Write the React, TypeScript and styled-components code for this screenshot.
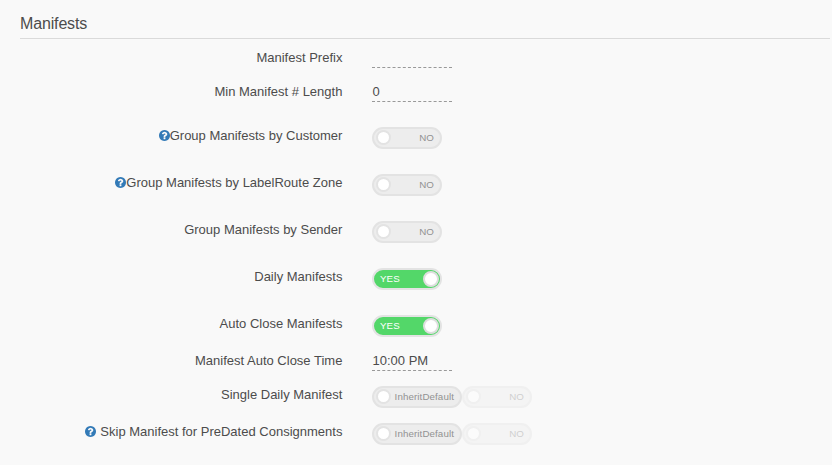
import React from "react";
import styled, { createGlobalStyle } from "styled-components";

const Global = createGlobalStyle`
  * { box-sizing: border-box; }
  body { margin: 0; background: #f9f9f9; font-family: "Liberation Sans", Arial, sans-serif; color: #4c4c4c; }
`;
const Page = styled.main`
  width: 832px;
  height: 465px;
  padding: 10px 2px 0 20px;
  background: #f9f9f9;
  overflow: hidden;
`;
const Title = styled.h2`
  margin: 0;
  height: 29px;
  border-bottom: 1px solid #dadada;
  font-size: 16px;
  line-height: 27px;
  letter-spacing: -0.15px;
  font-weight: 400;
`;
const Row = styled.div<{ $h: number }>`
  height: ${(p) => p.$h}px;
  display: grid;
  grid-template-columns: 322.4px 1fr;
  column-gap: 29.6px;
`;
const Label = styled.label<{ $top: number }>`
  display: flex;
  justify-content: flex-end;
  align-items: center;
  height: 18px;
  margin-top: ${(p) => p.$top}px;
  font-size: 13px;
  white-space: nowrap;
`;
const HelpIcon = styled.svg<{ $gap: number }>`
  fill: #337ab7;
  width: 11px;
  height: 11px;
  margin-right: ${(p) => p.$gap}px;
`;
const Value = styled.span`
  width: 80px;
  height: 20px;
  margin-top: 9px;
  padding-left: 0.5px;
  border-bottom: 1px dashed #999;
  font-size: 13px;
  line-height: 20px;
`;
const Controls = styled.div`
  display: flex;
  align-items: flex-start;
  padding-top: 13px;
`;
const Toggle = styled.span<{ $on?: boolean; $wide?: boolean; $faded?: boolean }>`
  display: flex;
  align-items: flex-start;
  justify-content: space-between;
  flex-direction: ${(p) => (p.$on ? "row-reverse" : "row")};
  width: ${(p) => (p.$wide ? 90 : 70)}px;
  height: 22px;
  border: 2px solid #e3e3e3;
  border-radius: 11px;
  background: ${(p) => (p.$on ? "#53d769" : "#ededed")};
  color: ${(p) => (p.$on ? "#fff" : "#929292")};
  padding: 1px ${(p) => (p.$on ? 1 : 6)}px 0 ${(p) => (p.$on ? 6 : 2)}px;
  opacity: ${(p) => (p.$faded ? 0.4 : 1)};
`;
const ToggleText = styled.span`
  font-size: 9.75px;
  line-height: 15px;
  letter-spacing: 0.1px;
`;
const Knob = styled.i<{ $on?: boolean }>`
  width: ${(p) => (p.$on ? 16 : 15)}px;
  height: ${(p) => (p.$on ? 16 : 15)}px;
  border-radius: 50%;
  border: 2px solid ${(p) => (p.$on ? "#dedede" : "#e3e3e3")};
  background: #fff;
`;

function Help({ gap }: { gap: number }) {
  return (
    <HelpIcon $gap={gap} viewBox="128 128 1536 1536" aria-hidden="true">
      <path d="M1024 1376v-192q0-14-9-23t-23-9h-192q-14 0-23 9t-9 23v192q0 14 9 23t23 9h192q14 0 23-9t9-23zm256-672q0-88-55.5-163t-138.5-116-170-41q-243 0-371 213-15 24 8 42l132 100q7 6 19 6 16 0 25-12 53-68 86-92 34-24 86-24 48 0 85.5 26t37.5 59q0 38-20 61t-68 45q-63 28-115.5 86.5t-52.5 125.5v36q0 14 9 23t23 9h192q14 0 23-9t9-23q0-19 21.5-49.500t54.500-49.500q32-18 49-28.500t46-35 44.500-48 28-60.500 12.500-81zm384 192q0 209-103 385.500t-279.500 279.500-385.500 103-385.500-103-279.500-279.500-103-385.500 103-385.500 279.500-279.500 385.500-103 385.500 103 279.500 279.500 103 385.500z" />
    </HelpIcon>
  );
}

type SwitchProps = { text: string; on?: boolean; wide?: boolean; faded?: boolean };

function Switch({ text, on, wide, faded }: SwitchProps) {
  return (
    <Toggle $on={on} $wide={wide} $faded={faded}>
      <Knob $on={on} />
      <ToggleText>{text}</ToggleText>
    </Toggle>
  );
}

type Item = { label: string; h: number; top: number; value?: string; on?: boolean; inherit?: boolean; help?: number };
const items: Item[] = [
  { label: "Manifest Prefix", h: 34, top: 9, value: "" },
  { label: "Min Manifest # Length", h: 41, top: 9, value: "0" },
  { label: "Group Manifests by Customer", h: 47, top: 12, help: 0 },
  { label: "Group Manifests by LabelRoute Zone", h: 47, top: 12, help: 0 },
  { label: "Group Manifests by Sender", h: 47, top: 12 },
  { label: "Daily Manifests", h: 47, top: 12, on: true },
  { label: "Auto Close Manifests", h: 40, top: 12, on: true },
  { label: "Manifest Auto Close Time", h: 31, top: 9, value: "10:00 PM" },
  { label: "Single Daily Manifest", h: 37, top: 12, inherit: true },
  { label: "Skip Manifest for PreDated Consignments", h: 37, top: 12, inherit: true, help: 4 },
];

export default function App() {
  return (
    <>
      <Global />
      <Page>
        <Title>Manifests</Title>
        {items.map((it) => (
          <Row key={it.label} $h={it.h}>
            <Label $top={it.top}>
              {it.help !== undefined && <Help gap={it.help} />}
              {it.label}
            </Label>
            {it.value !== undefined ? (
              <Value>{it.value}</Value>
            ) : (
              <Controls>
                {it.inherit && <Switch wide text="InheritDefault" />}
                <Switch on={it.on} faded={it.inherit} text={it.on ? "YES" : "NO"} />
              </Controls>
            )}
          </Row>
        ))}
      </Page>
    </>
  );
}
